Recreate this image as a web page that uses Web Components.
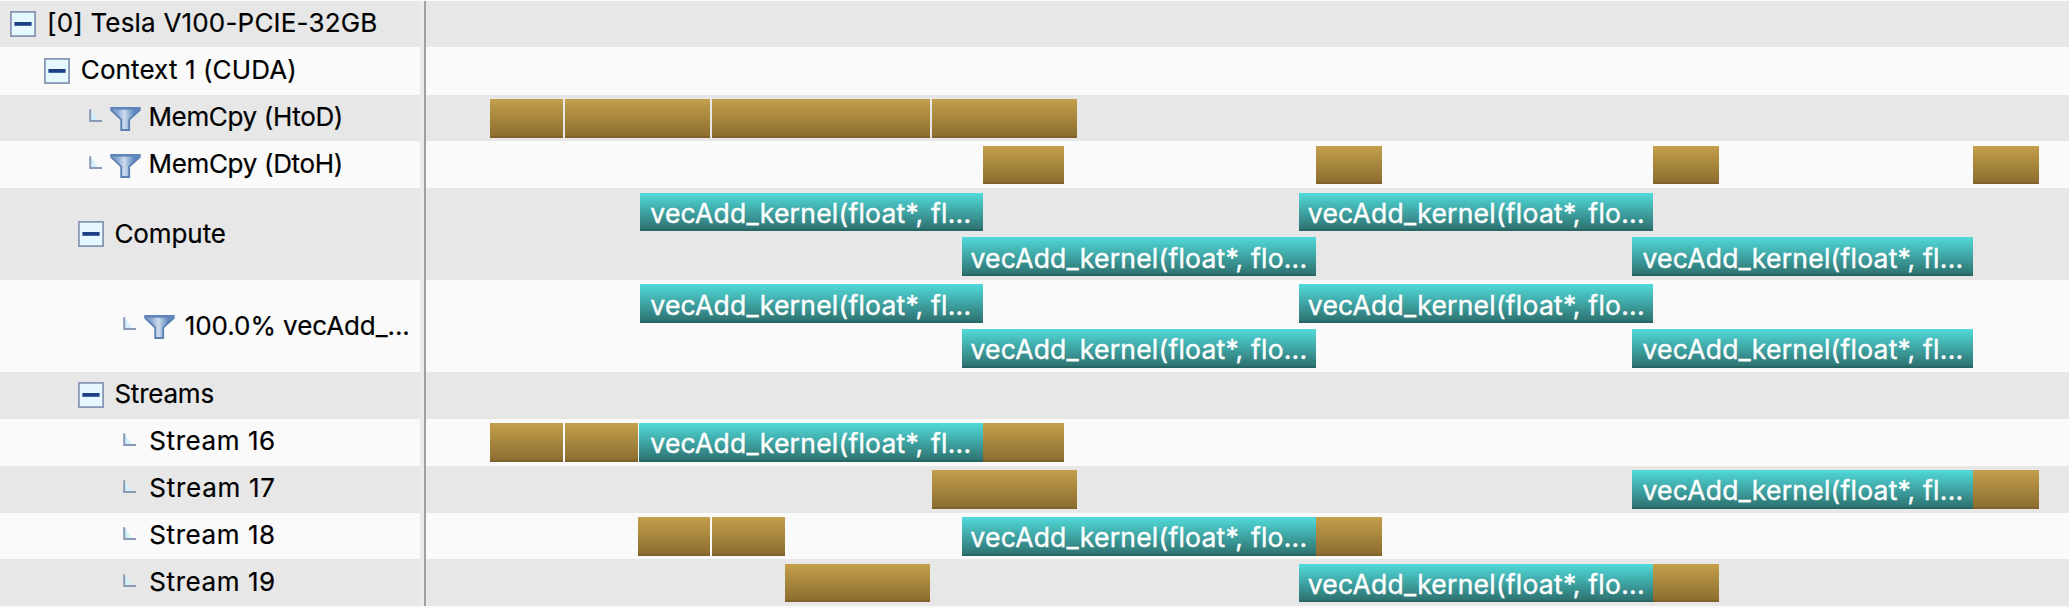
<!DOCTYPE html>
<html lang="en">
<head>
<meta charset="utf-8">
<title>Timeline</title>
<style>
  html, body { margin: 0; background: #fafafa; }
  body { width: 2069px; height: 608px; overflow: hidden; font-family: Inter, "Noto Sans", sans-serif; }
</style>
</head>
<body>
<profiler-timeline></profiler-timeline>
<script>
/* Text whose tracking is adjusted so that it spans the given width. */
class FitText extends HTMLElement {
  connectedCallback() {
    const root = this.attachShadow({ mode: 'open' });
    root.innerHTML = `<style>
      :host { display: block; white-space: pre; line-height: 32px; }
      span { display: inline-block; }
    </style><span><slot></slot></span>`;
    const span = root.querySelector('span');
    const target = parseFloat(this.getAttribute('span'));
    const n = this.textContent.length;
    if (target) {
      const w = span.getBoundingClientRect().width;
      span.style.letterSpacing = ((target - w) / n).toFixed(3) + 'px';
    }
  }
}
customElements.define('fit-text', FitText);

/* Minus box used by expanded nodes. */
class TreeToggle extends HTMLElement {
  connectedCallback() {
    this.attachShadow({ mode: 'open' }).innerHTML = `<style>
      :host { display: block; width: 26px; height: 26px; }
      svg { display: block; }
    </style>
    <svg width="26" height="26" viewBox="0 0 26 26">
      <rect x=".9" y=".9" width="24.2" height="24.2" fill="#e6f8ff" stroke="#8797b4" stroke-width="1.8"/>
      <rect x="4.4" y="11" width="17.2" height="3.8" fill="#1d4084"/>
    </svg>`;
  }
}
customElements.define('tree-toggle', TreeToggle);

/* Elbow connector in front of a leaf node. */
class TreeElbow extends HTMLElement {
  connectedCallback() {
    this.attachShadow({ mode: 'open' }).innerHTML = `<style>
      :host { display: block; width: 14px; height: 14px; }
      svg { display: block; }
    </style>
    <svg width="14" height="14" viewBox="0 0 14 14">
      <path d="M2 1V11.5H9Z" fill="#d3f1fb"/>
      <path d="M1.2 .3V12H13" fill="none" stroke="#8b9ab4" stroke-width="2"/>
    </svg>`;
  }
}
customElements.define('tree-elbow', TreeElbow);

class FunnelIcon extends HTMLElement {
  connectedCallback() {
    this.attachShadow({ mode: 'open' }).innerHTML = `<style>
      :host { display: block; width: 31px; height: 24px; }
      svg { display: block; }
    </style>
    <svg width="31" height="24" viewBox="0 0 31 24">
      <defs><linearGradient id="g" x1="0" x2="1" y1="0" y2="0">
        <stop offset=".2" stop-color="#86a6cf"/><stop offset=".46" stop-color="#cddcee"/><stop offset=".8" stop-color="#6088be"/>
      </linearGradient></defs>
      <path d="M1.2 1H29.8V3L19.2 12.6V23H11.2V12.6L1.2 3Z" fill="url(#g)" stroke="#5b80b3" stroke-width="1.8"/>
      <path d="M1 1.6H30" stroke="#6086bb" stroke-width="2.2"/>
    </svg>`;
  }
}
customElements.define('funnel-icon', FunnelIcon);

/* One interval on a lane. */
class TimeBar extends HTMLElement {
  connectedCallback() {
    this.attachShadow({ mode: 'open' }).innerHTML = `<style>
      :host { display: block; box-sizing: border-box; height: 38.7px; flex: none; overflow: hidden;
        font-size: 26.5px; color: #fff; -webkit-text-stroke: .4px #fff; padding-top: 4.3px; }
      :host([kind="copy"]) { background: linear-gradient(#c4a04c, #8b6d2f 96%, #80622a 96%); }
      :host([kind="kernel"]) { background: linear-gradient(#51dada, #2d7270 96%, #266664 96%); }
    </style><slot></slot>`;
  }
}
customElements.define('time-bar', TimeBar);

class TimelineRow extends HTMLElement {
  set data(d) {
    const lanes = d.lanes.map(l => {
      let x = 427, h = '';
      for (const [a, b, t, tx, tw] of l) {
        h += `<time-bar kind="${t ? 'kernel' : 'copy'}" style="width:${(b - a).toFixed(2)}px;margin-left:${(a - x).toFixed(2)}px">` +
          (t ? `<fit-text span="${tw}" style="padding-left:${(tx - a).toFixed(2)}px">${t}</fit-text>` : '') + `</time-bar>`;
        x = b;
      }
      return `<div class="lane">${h}</div>`;
    }).join('');
    const icons = d.icons.map(([n, gap, dy]) => `<${n} style="margin-left:${gap}px;margin-top:${dy || 0}px"></${n}>`).join('');
    this.attachShadow({ mode: 'open' }).innerHTML = `<style>
      :host { display: flex; height: ${d.h}px; background: ${d.shade ? '#e7e7e7' : '#fafafa'}; }
      .label { width: 420px; flex: none; display: flex; align-items: center; overflow: hidden; }
      .label > * { flex: none; }
      .label fit-text { font-size: 26px; color: #000; -webkit-text-stroke: .2px #000; }
      .rule { width: 7px; flex: none; background: linear-gradient(90deg, #ebebeb 4px, #a0a0a0 4px 6.4px, transparent 6.4px); }
      .lanes { flex: 1; min-width: 0; display: flex; flex-direction: column; gap: 6px; padding-top: 4.3px; }
      .lane { display: flex; height: 38.7px; }
    </style>
    <div class="label">${icons}<fit-text span="${d.w}" style="margin-left:${d.gap}px;margin-top:${d.dy ?? -2}px">${d.text}</fit-text></div>
    <div class="rule"></div><div class="lanes">${lanes}</div>`;
  }
}
customElements.define('timeline-row', TimelineRow);

const S = 'vecAdd_kernel(float*, fl...', L = 'vecAdd_kernel(float*, flo...';
const K1 = [639.5, 983.2, S, 650.3, 321], K2 = [961.7, 1316, L, 970.4, 337];
const K3 = [1298.7, 1653, L, 1307.8, 337], K4 = [1631.6, 1973, S, 1642.4, 321];
const T = 'tree-toggle', E = 'tree-elbow', F = 'funnel-icon';
const fork = [[E, 89, -4], [F, 6.7, 2]];
const rows = [
  { text: '[0] Tesla V100-PCIE-32GB', w: 330.5, gap: 11, icons: [[T, 10]], h: 46.4, lanes: [[]] },
  { text: 'Context 1 (CUDA)', w: 216, gap: 10.5, icons: [[T, 44.3]], h: 47.2, lanes: [[]] },
  { text: 'MemCpy (HtoD)', w: 194.5, gap: 7.8, icons: fork, h: 46.8,
    lanes: [[[490.3, 562.8], [565.1, 710.2], [712.5, 930], [932.3, 1077]]] },
  { text: 'MemCpy (DtoH)', w: 194.5, gap: 7.8, icons: fork, h: 47,
    lanes: [[[983.2, 1064.3], [1316, 1382], [1653, 1719.3], [1973, 2039.2]]] },
  { text: 'Compute', w: 111.5, gap: 10, dy: 0, icons: [[T, 78.4]], h: 91.7, lanes: [[K1, K3], [K2, K4]] },
  { text: '100.0% vecAdd_...', w: 225, gap: 9.8, dy: 0, icons: [[E, 123.3, -4], [F, 6.7, 2]], h: 91.7, lanes: [[K1, K3], [K2, K4]] },
  { text: 'Streams', w: 99.5, gap: 10, icons: [[T, 78.4]], h: 47, lanes: [[]] },
  { text: 'Stream 16', w: 126.5, gap: 12, icons: [[E, 123.3, -4]], h: 47,
    lanes: [[[490.3, 562.8], [565.1, 637.7], K1, [983.2, 1064.3]]] },
  { text: 'Stream 17', w: 126.5, gap: 12, icons: [[E, 123.3, -4]], h: 47, lanes: [[[932.3, 1077], K4, [1973, 2039.2]]] },
  { text: 'Stream 18', w: 126.5, gap: 12, icons: [[E, 123.3, -4]], h: 46.7,
    lanes: [[[637.6, 710.2], [712.5, 784.8], K2, [1316, 1382]]] },
  { text: 'Stream 19', w: 126.5, gap: 12, icons: [[E, 123.3, -4]], h: 46.6, lanes: [[[784.6, 930], K3, [1653, 1719.3]]] }
];

class ProfilerTimeline extends HTMLElement {
  connectedCallback() {
    const root = this.attachShadow({ mode: 'open' });
    root.innerHTML = `<style>
      :host { display: flex; flex-direction: column; width: 2069px; height: 608px; padding-top: 1px; box-sizing: border-box; }
      timeline-row { flex: none; }
    </style>`;
    rows.forEach((r, i) => {
      const el = document.createElement('timeline-row');
      root.append(el);
      el.data = { ...r, shade: i % 2 === 0 };
    });
  }
}
customElements.define('profiler-timeline', ProfilerTimeline);
</script>
</body>
</html>
